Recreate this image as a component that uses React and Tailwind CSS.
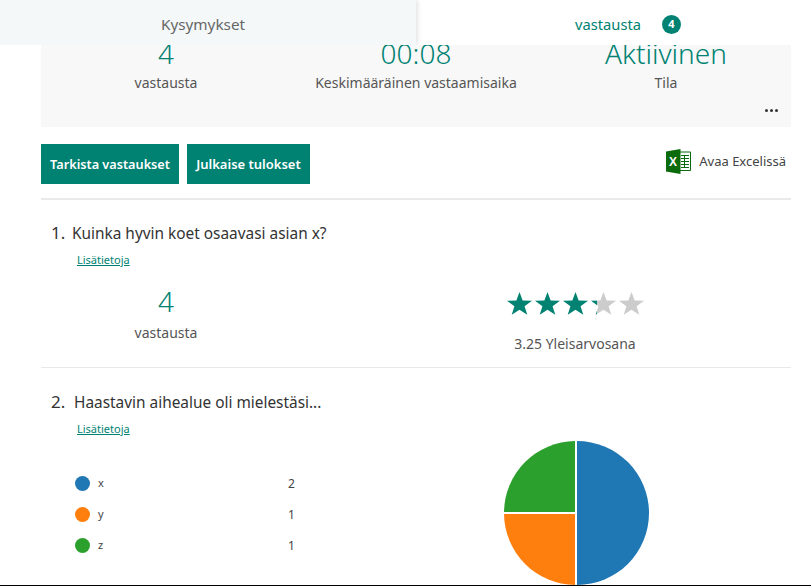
const FONT = { fontFamily: '"Noto Sans", "Open Sans", sans-serif' };

function Stat({ value, label }) {
  return (
    <div className="flex flex-col items-center">
      <div className="text-[28px] leading-[38px] text-[#008272] font-light">{value}</div>
      <div className="text-[14px] leading-[20px] text-[#555] mt-[1px]">{label}</div>
    </div>
  );
}

function Star({ fill = 0, id }) {
  const d = "M13.5 0 L16.9 9.6 L27 9.9 L19 16 L21.9 25.7 L13.5 20 L5.1 25.7 L8 16 L0 9.9 L10.1 9.6 Z";
  return (
    <svg width="25" height="23" viewBox="0 0 27 26" preserveAspectRatio="none">
      <defs>
        <linearGradient id={id}>
          <stop offset={fill} stopColor="#008272" />
          <stop offset={fill} stopColor="#cccccc" />
        </linearGradient>
      </defs>
      <path d={d} fill={`url(#${id})`} />
    </svg>
  );
}

function ExcelIcon() {
  return (
    <svg width="25" height="25" viewBox="0 0 25 25">
      <path d="M9 3 H24.5 V21.5 H9 Z" fill="#fff" stroke="#0b6a0b" strokeWidth="1" />
      <path d="M15 6.5 H23 M15 9.5 H23 M15 12.5 H23 M15 15.5 H23 M15 18.5 H23 M18.5 6 V19" stroke="#0b6a0b" strokeWidth="1" fill="none" />
      <path d="M0 2.5 L14.5 0 V25 L0 22.5 Z" fill="#0b6a0b" />
      <text x="7" y="17" textAnchor="middle" fontSize="12" fontWeight="700" fill="#fff" fontFamily="Liberation Sans">X</text>
    </svg>
  );
}

function Question({ n, text, gap }) {
  return (
    <div className="flex items-baseline pl-[10px]">
      <span className="text-[17px] leading-[22px] text-[#333]" style={{ width: gap }}>{n}</span>
      <span className="text-[15.4px] leading-[22px] text-[#333]">{text}</span>
    </div>
  );
}

function More() {
  return <a className="block text-[11px] leading-[16px] text-[#008272] underline ml-[36px]">Lisätietoja</a>;
}

function Legend({ color, label, value }) {
  return (
    <div className="flex items-center h-[31px]">
      <span className="w-[15px] h-[15px] rounded-full" style={{ background: color }} />
      <span className="w-[198px] pl-[8px] text-[11px] text-[#444]">{label}</span>
      <span className="text-[12px] text-[#444]">{value}</span>
    </div>
  );
}

export default function App() {
  return (
    <div className="h-[586px] w-[811px] overflow-hidden bg-white border-b border-black" style={FONT}>
      <div className="flex h-[45px] overflow-hidden">
        <div className="w-[416px] bg-[#f4f8f9] flex items-center justify-center text-[15.3px] text-[#666] pr-[10px] pt-[3px] shadow-[2px_0_4px_rgba(0,0,0,0.1)]">
          Kysymykset
        </div>
        <div className="flex-1 flex items-center justify-center gap-[21px] text-[14.7px] text-[#008272] pl-[29px] pt-[3px]">
          <span>vastausta</span>
          <span className="w-[19px] h-[19px] rounded-full bg-[#008272] text-white text-[11px] font-bold flex items-center justify-center">4</span>
        </div>
      </div>

      <div className="mx-[41px] w-[750px]">
        <div className="relative h-[82px] bg-[#f8f8f8] overflow-hidden">
          <div className="-mt-[11px] grid grid-cols-3">
            <Stat value="4" label="vastausta" />
            <Stat value="00:08" label="Keskimääräinen vastaamisaika" />
            <Stat value="Aktiivinen" label="Tila" />
          </div>
          <div className="absolute right-[13px] top-[64px] flex gap-[2px]">
            <span className="w-[3px] h-[3px] rounded-full bg-[#333]" />
            <span className="w-[3px] h-[3px] rounded-full bg-[#333]" />
            <span className="w-[3px] h-[3px] rounded-full bg-[#333]" />
          </div>
        </div>

        <div className="flex items-center mt-[17px] h-[40px] gap-[8px]">
          <button className="h-[40px] w-[138px] pt-[2px] bg-[#008272] text-white text-[12.7px] font-semibold">Tarkista vastaukset</button>
          <button className="h-[40px] w-[123px] pt-[2px] bg-[#008272] text-white text-[13px] font-semibold">Julkaise tulokset</button>
          <div className="ml-auto flex items-center gap-[8px] pr-[5px] -mt-[5px]">
            <ExcelIcon />
            <span className="text-[13px] text-[#444]">Avaa Excelissä</span>
          </div>
        </div>

        <div className="mt-[14px] h-[2px] bg-[#eaeaea]" />

        <div className="mt-[22px]">
          <Question n="1." text="Kuinka hyvin koet osaavasi asian x?" gap="21px" />
          <div className="mt-[7px]"><More /></div>
          <div className="flex mt-[14px]">
            <div className="w-[250px] flex flex-col items-center">
              <div className="text-[28px] leading-[38px] text-[#008272] font-light">4</div>
              <div className="text-[14px] leading-[20px] text-[#555] mt-[3px]">vastausta</div>
            </div>
            <div className="ml-[216px] w-[136px] flex flex-col items-center mt-[10px]">
              <div className="flex gap-[3px] h-[23px]">
                <Star id="s1" fill={1} />
                <Star id="s2" fill={1} />
                <Star id="s3" fill={1} />
                <Star id="s4" fill={0.25} />
                <Star id="s5" fill={0} />
              </div>
              <div className="text-[14px] leading-[20px] text-[#555] mt-[19px] whitespace-nowrap">3.25 Yleisarvosana</div>
            </div>
          </div>
        </div>

        <div className="mt-[13px] h-px bg-[#e8e8e8]" />

        <div className="mt-[23px]">
          <Question n="2." text="Haastavin aihealue oli mielestäsi..." gap="23px" />
          <div className="mt-[7px]"><More /></div>
          <div className="flex items-start mt-[3px]">
            <div className="ml-[34px] mt-[28px] w-[270px]">
              <Legend color="#1f77b4" label="x" value="2" />
              <Legend color="#ff7f0e" label="y" value="1" />
              <Legend color="#2ca02c" label="z" value="1" />
            </div>
            <svg className="ml-[158px] shrink-0" width="146" height="146" viewBox="-73 -73 146 146">
              <path d="M1 -72 A72 72 0 0 1 1 72 Z" fill="#1f77b4" />
              <path d="M-1 1 V72 A72 72 0 0 1 -72 1 Z" fill="#ff7f0e" />
              <path d="M-1 -1 V-72 A72 72 0 0 0 -72 -1 Z" fill="#2ca02c" />
            </svg>
          </div>
        </div>
      </div>
    </div>
  );
}
